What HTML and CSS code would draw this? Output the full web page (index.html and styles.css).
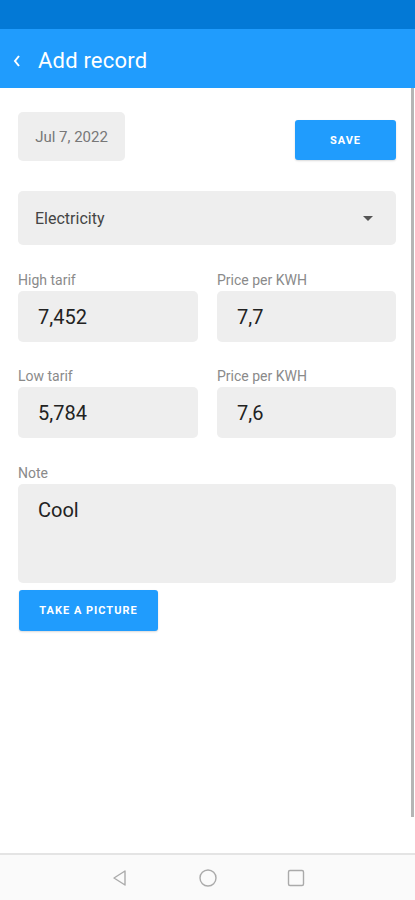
FILE: index.html
```html
<!doctype html>
<html>
<head>
    <meta charset="utf-8">
    <meta name="viewport" content="width=device-width,initial-scale=1">
    <title>Add record</title>
    <link rel="stylesheet" href="styles.css">
</head>
<body>
	<div id="phone">
		<div class="status"></div>
		<div class="appbar">
			<svg class="back" width="10" height="14" viewBox="0 0 10 14"><path d="M7 2 L3 7 L7 12" fill="none" stroke="#fff" stroke-width="2"/></svg>
			<span class="title">Add record</span>
		</div>
		<div class="content">
			<div class="toprow">
				<div class="date">Jul 7, 2022</div>
				<div class="btn save">SAVE</div>
			</div>
			<div class="select">
				<span>Electricity</span>
				<svg width="10" height="5" viewBox="0 0 10 5"><path d="M0 0 H10 L5 5 Z" fill="#555"/></svg>
			</div>
			<div class="grid">
				<div class="field">
					<div class="label">High tarif</div>
					<div class="input">7,452</div>
				</div>
				<div class="field">
					<div class="label">Price per KWH</div>
					<div class="input">7,7</div>
				</div>
				<div class="field">
					<div class="label">Low tarif</div>
					<div class="input">5,784</div>
				</div>
				<div class="field">
					<div class="label">Price per KWH</div>
					<div class="input">7,6</div>
				</div>
			</div>
			<div class="field note">
				<div class="label">Note</div>
				<div class="input area">Cool</div>
			</div>
			<div class="btn picture">TAKE A PICTURE</div>
		</div>
		<div class="scrollbar"></div>
		<div class="navbar">
			<svg width="20" height="20" viewBox="0 0 20 20"><path d="M15 3 L4 10 L15 17 Z" fill="none" stroke="#aaa" stroke-width="1.4" stroke-linejoin="round"/></svg>
			<svg width="20" height="20" viewBox="0 0 20 20"><circle cx="10" cy="10" r="8" fill="none" stroke="#aaa" stroke-width="1.4"/></svg>
			<svg width="20" height="20" viewBox="0 0 20 20"><rect x="2.5" y="2.5" width="15" height="15" rx="1.5" fill="none" stroke="#aaa" stroke-width="1.4"/></svg>
		</div>
	</div>
</body>
</html>
```

FILE: styles.css
```css
*{margin:0; padding:0; box-sizing:border-box;}
body{font-family:Roboto, "Noto Sans", sans-serif; background:#fff;}
#phone{position:relative; width:415px; height:900px; display:flex; flex-direction:column; overflow:hidden;}
.status{height:29px; background:#0379d6;}
.appbar{height:59px; background:#209cfd; display:flex; align-items:center; padding-left:12px; padding-top:3px; color:#fff;}
.back{margin-right:16px; margin-top:1px;}
.title{font-size:22px; font-weight:400; letter-spacing:0.2px;}
.content{flex:1; padding:24px 19px 0 18px;}
.toprow{display:flex; justify-content:space-between; align-items:flex-start;}
.date{width:107px; height:49px; background:#eeeeee; border-radius:5px; color:#777; font-size:15px; display:flex; align-items:center; justify-content:center;}
.btn{background:#209cfd; color:#fff; font-weight:700; font-size:11px; letter-spacing:1px; border-radius:3px; display:flex; align-items:center; justify-content:center; box-shadow:0 1px 2px rgba(0,0,0,.15);}
.save{width:101px; height:40px; margin-top:8px;}
.select{margin-top:30px; height:54px; background:#eeeeee; border-radius:5px; display:flex; align-items:center; justify-content:space-between; padding:0 23px 0 17px; font-size:16px; color:#444;}
.grid{display:grid; grid-template-columns:180px 179px; column-gap:19px; row-gap:25px; margin-top:26px;}
.label{font-size:14px; color:#8a8a8a; height:20px; line-height:18px;}
.input{height:51px; background:#eeeeee; border-radius:5px; display:flex; align-items:center; padding-left:20px; font-size:20px; color:#222;}
.note{margin-top:26px;}
.input.area{height:99px; align-items:flex-start; padding-top:14px;}
.picture{width:139px; height:41px; margin-top:7px; margin-left:1px;}
.scrollbar{position:absolute; right:1px; top:88px; width:3px; height:729px; background:#b5b5b5;}
.navbar{height:47px; border-top:2px solid #e4e4e4; background:#fafafa; display:flex; justify-content:center; align-items:center; gap:68px;}
```
